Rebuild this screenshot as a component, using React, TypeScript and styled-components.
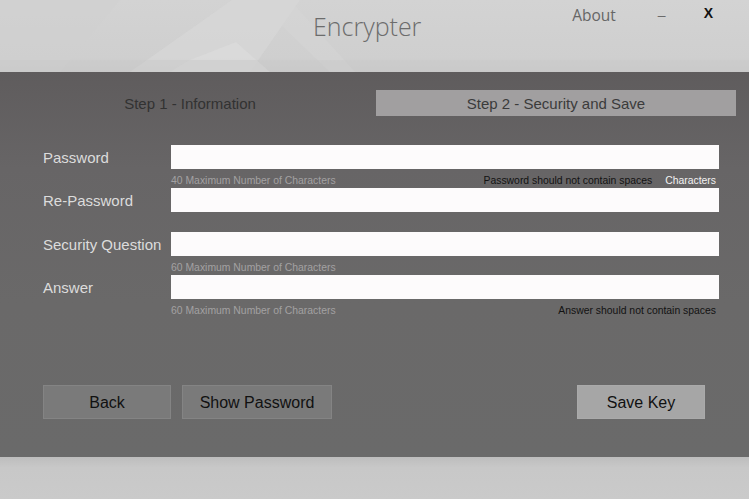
import React from "react";
import styled, { createGlobalStyle } from "styled-components";

const Global = createGlobalStyle`
  html, body { margin: 0; padding: 0; }
  body {
    width: 749px;
    height: 499px;
    overflow: hidden;
    background: #c8c8c8;
    font-family: "Liberation Sans", Arial, sans-serif;
  }
`;

const Window = styled.div`
  width: 749px;
  height: 499px;
  display: flex;
  flex-direction: column;
`;

const Header = styled.header`
  position: relative;
  height: 72px;
  flex: none;
  display: flex;
  align-items: flex-start;
  background: linear-gradient(180deg, #d3d3d3 0%, #cfcfcf 80%, #c9c9c9 100%);
  overflow: hidden;
`;

const HeaderArt = styled.svg`
  position: absolute;
  inset: 0;
  pointer-events: none;
`;

const Title = styled.h1`
  position: relative;
  margin: 8px 0 0 313px;
  font-family: "Open Sans", "Noto Sans", sans-serif;
  font-weight: 300;
  font-size: 25px;
  color: #6c6c6c;
  line-height: 36px;
`;

const Controls = styled.nav`
  position: relative;
  margin-left: auto;
  display: flex;
  align-items: flex-start;
  padding-right: 36px;
`;

const AboutLink = styled.span`
  font-family: "Open Sans", "Noto Sans", sans-serif;
  font-size: 15.5px;
  color: #666666;
  line-height: 22px;
  margin: 4px 0 0 2px;
`;

const WinButton = styled.span<{ $gap: number; $top: number }>`
  margin-left: ${(p) => p.$gap}px;
  margin-top: ${(p) => p.$top}px;
  font-family: "Liberation Sans", Arial, sans-serif;
  font-weight: 700;
  font-size: 14px;
  color: #111;
  line-height: 20px;
`;

const Panel = styled.main`
  flex: 1;
  display: flex;
  flex-direction: column;
  padding-top: 18px;
  background: linear-gradient(180deg, #5f5c5d 0%, #676566 25%, #6a6969 60%, #6a6a6a 100%);
`;

const Tabs = styled.div`
  display: flex;
  padding-left: 4px;
  height: 26px;
`;

const Tab = styled.div<{ $active?: boolean; $w: number }>`
  width: ${(p) => p.$w}px;
  display: flex;
  align-items: center;
  justify-content: center;
  font-size: 15px;
  color: ${(p) => (p.$active ? "#3b3b3b" : "#323232")};
  background: ${(p) => (p.$active ? "#a19fa0" : "transparent")};
`;

const Form = styled.div`
  margin-top: 29px;
  display: grid;
  grid-template-columns: 128px 548px;
  padding-left: 43px;
`;

const Label = styled.label`
  height: 24px;
  display: flex;
  align-items: center;
  font-size: 15px;
  color: #dcdcdc;
  white-space: nowrap;
`;

const Field = styled.div`
  display: flex;
  flex-direction: column;
`;

const Input = styled.div`
  height: 24px;
  background: #fdfbfc;
`;

const Hint = styled.div<{ $h: number }>`
  height: ${(p) => p.$h}px;
  box-sizing: border-box;
  display: flex;
  align-items: center;
  font-size: 10.4px;
  padding: 3px 3px 0 0;
`;

const Max = styled.span`
  color: #a3a1a2;
`;

const Warn = styled.span`
  margin-left: auto;
  color: #121212;
`;

const Chars = styled.span`
  margin-left: 13px;
  color: #f2f2f2;
`;

const Empty = styled.div``;

const Actions = styled.div`
  margin-top: 67px;
  display: flex;
  padding: 0 44px 0 43px;
`;

const Button = styled.button<{ $w: number; $primary?: boolean; $gap?: number }>`
  width: ${(p) => p.$w}px;
  height: 34px;
  margin-left: ${(p) => p.$gap ?? 0}px;
  border: 1px solid ${(p) => (p.$primary ? "#aaaaaa" : "#848484")};
  background: ${(p) => (p.$primary ? "#a6a6a6" : "#7a7a7a")};
  font-family: "Liberation Sans", Arial, sans-serif;
  font-size: 16px;
  color: #111;
  padding: 1px 0 0;
  cursor: pointer;
`;

const Spacer = styled.div`
  flex: 1;
`;

const Footer = styled.footer`
  height: 42px;
  flex: none;
  background: linear-gradient(180deg, #bdbdbd 0%, #c8c8c8 25%, #cacaca 100%);
`;

type Row = {
  label: string;
  max?: string;
  warn?: string;
  chars?: boolean;
  hint: number;
};

const rows: Row[] = [
  { label: "Password", max: "40 Maximum Number of Characters", warn: "Password should not contain spaces", chars: true, hint: 19 },
  { label: "Re-Password", hint: 20 },
  { label: "Security Question", max: "60 Maximum Number of Characters", hint: 19 },
  { label: "Answer", max: "60 Maximum Number of Characters", warn: "Answer should not contain spaces", hint: 19 },
];

export default function App() {
  return (
    <>
      <Global />
      <Window>
        <Header>
          <HeaderArt width="749" height="72" viewBox="0 0 749 72">
            <polygon points="130,72 232,0 300,0 250,72" fill="#d9d9d9" opacity="0.6" />
            <polygon points="190,60 236,42 270,72 170,72" fill="#dcdcdc" opacity="0.7" />
            <polygon points="255,0 290,0 355,72 330,72" fill="#d6d6d6" opacity="0.5" />
            <polygon points="0,0 120,0 60,72 0,72" fill="#cfcfcf" opacity="0.5" />
            <rect x="0" y="60" width="749" height="12" fill="#cacaca" opacity="0.5" />
          </HeaderArt>
          <Title>Encrypter</Title>
          <Controls>
            <AboutLink>About</AboutLink>
            <WinButton $gap={42} $top={0}>_</WinButton>
            <WinButton $gap={38} $top={3}>X</WinButton>
          </Controls>
        </Header>
        <Panel>
          <Tabs>
            <Tab $w={372}>Step 1 - Information</Tab>
            <Tab $w={360} $active>Step 2 - Security and Save</Tab>
          </Tabs>
          <Form>
            {rows.map((r) => (
              <React.Fragment key={r.label}>
                <Label>{r.label}</Label>
                <Field>
                  <Input />
                  <Hint $h={r.hint}>
                    {r.max ? <Max>{r.max}</Max> : <Empty />}
                    {r.warn && <Warn>{r.warn}</Warn>}
                    {r.chars && <Chars>Characters</Chars>}
                  </Hint>
                </Field>
              </React.Fragment>
            ))}
          </Form>
          <Actions>
            <Button $w={128}>Back</Button>
            <Button $w={150} $gap={11}>Show Password</Button>
            <Spacer />
            <Button $w={128} $primary>Save Key</Button>
          </Actions>
        </Panel>
        <Footer />
      </Window>
    </>
  );
}
